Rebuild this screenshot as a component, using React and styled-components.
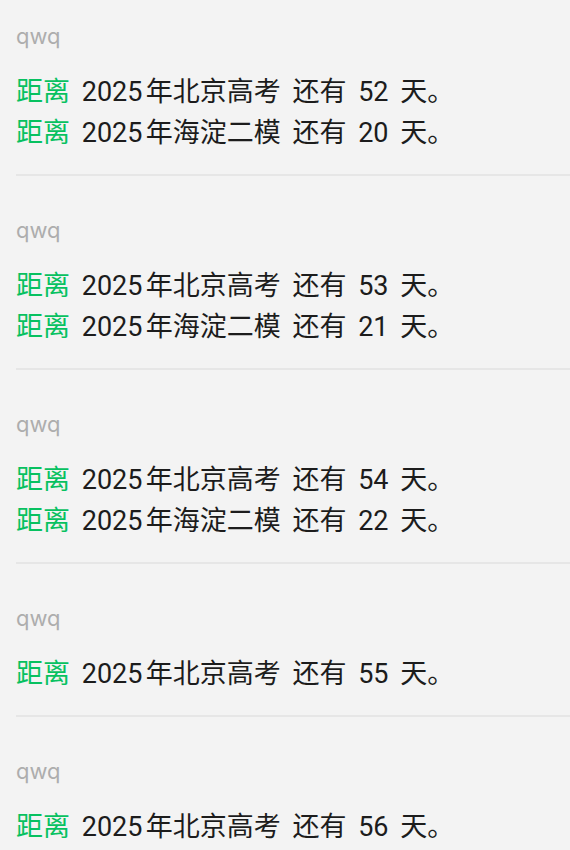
import styled, { createGlobalStyle } from 'styled-components';

const GlobalStyle = createGlobalStyle`
    body {
        margin: 0;
        background: #f3f3f3;
        font-family: Roboto, "Noto Sans CJK SC", sans-serif;
    }
`

// 테스트 데이터
const feed = [
    { author: "qwq", events: [["2025年北京高考", 52], ["2025年海淀二模", 20]] },
    { author: "qwq", events: [["2025年北京高考", 53], ["2025年海淀二模", 21]] },
    { author: "qwq", events: [["2025年北京高考", 54], ["2025年海淀二模", 22]] },
    { author: "qwq", events: [["2025年北京高考", 55]] },
    { author: "qwq", events: [["2025年北京高考", 56]] },
];

const CountdownLine = ({ name, days }) => (
    <Line>
        <Accent>距离</Accent> {name} 还有 {days} 天。
    </Line>
)

const App = () => {
    return (
        <>
            <GlobalStyle />
            <List>
                {feed.map((item, idx) => (
                    <Item key={idx}>
                        <Author>{item.author}</Author>
                        <Lines>
                            {item.events.map(([name, days], i) => (
                                <CountdownLine key={i} name={name} days={days} />
                            ))}
                        </Lines>
                    </Item>
                ))}
            </List>
        </>
    )
}
export default App;

const List = styled.div`
    display: flex;
    flex-direction: column;
    gap: 18px;
    overflow: hidden;
    height: 850px;
`
const Item = styled.div`
    display: flex;
    flex-direction: column;
    gap: 22px;
    margin-left: 16px;
    padding: 22px 0 20px 0;
    border-bottom: 2px solid #e6e6e6;
`
const Author = styled.div`
    font-family: Inter, "Noto Sans CJK SC", sans-serif;
    font-size: 22px;
    line-height: 28px;
    color: #adadad;
`
const Lines = styled.div`
    display: flex;
    flex-direction: column;
`
const Line = styled.div`
    font-size: 27px;
    line-height: 41px;
    word-spacing: 5px;
    text-autospace: normal;
    color: #1c1c1c;
    white-space: nowrap;
`
const Accent = styled.span`
    color: #07c160;
`
